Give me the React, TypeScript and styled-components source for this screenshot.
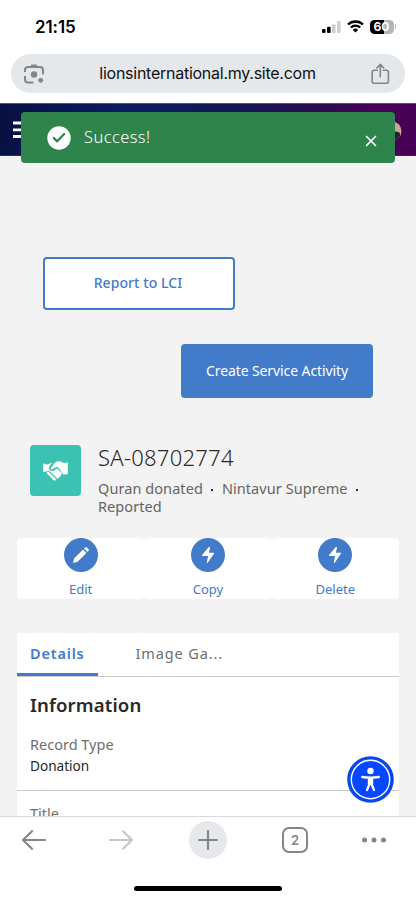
import React from 'react';
import styled, { createGlobalStyle } from 'styled-components';

const Global = createGlobalStyle`
  * { box-sizing: border-box; }
  body { margin: 0; background: #fff; }
  button { font: inherit; border: 0; padding: 0; margin: 0; background: none; color: inherit; }
  svg { display: block; flex: none; }
`;

const Screen = styled.div`
  width: 416px;
  height: 900px;
  display: flex;
  flex-direction: column;
  overflow: hidden;
  position: relative;
  background: #fff;
  font-family: 'Noto Sans', sans-serif;
`;

const StatusBar = styled.header`
  height: 54px;
  flex: none;
  display: flex;
  justify-content: space-between;
  padding: 17px 20px 0 35px;
  font-family: Inter, sans-serif;
`;

const Clock = styled.time`
  font-size: 17px;
  line-height: 20px;
  font-weight: 600;
  letter-spacing: -0.1px;
  color: #000;
`;

const StatusIcons = styled.div`
  display: flex;
  height: 19px;
  align-items: center;
  gap: 6px;
`;

const Battery = styled.div`
  display: flex;
  align-items: center;
  gap: 1px;
`;

const BatteryBody = styled.div`
  width: 24px;
  height: 14px;
  border-radius: 4.5px;
  background: linear-gradient(90deg, #000 60%, #b5b5b5 60%);
  color: #fff;
  font-size: 12px;
  line-height: 14px;
  font-weight: 700;
  text-align: center;
`;

const BatteryTip = styled.div`
  width: 1.5px;
  height: 5px;
  border-radius: 0 2px 2px 0;
  background: #b5b5b5;
`;

const AddressBar = styled.div`
  height: 39px;
  flex: none;
  margin: 0 11px 10px;
  padding: 0 15px 0 13px;
  border-radius: 20px;
  background: #e5e8eb;
  display: flex;
  align-items: center;
  justify-content: space-between;
`;

const Url = styled.span`
  font-family: Inter, sans-serif;
  font-size: 16px;
  line-height: 20px;
  letter-spacing: -0.26px;
  color: #111;
  white-space: nowrap;
  margin-top: -2px;
`;

const SiteHeader = styled.div`
  height: 53px;
  flex: none;
  border-top: 1px solid #55557a;
  border-bottom: 1px solid #35206a;
  background: linear-gradient(100deg, #07103f 0%, #071653 12%, #0a1c60 30%, #111856 55%, #2c0b50 75%, #4b0058 92%, #450054 100%);
  display: flex;
  align-items: flex-start;
  justify-content: space-between;
  padding: 17px 14px 0 13px;
`;

const Page = styled.main`
  flex: 1;
  min-height: 0;
  overflow: hidden;
  background: #f3f3f3;
  display: flex;
  flex-direction: column;
  padding: 101px 17px 0;
`;

const Toast = styled.div`
  position: absolute;
  left: 21px;
  top: 112px;
  width: 374px;
  height: 51px;
  border-radius: 4px;
  background: #2e844a;
  display: flex;
  align-items: center;
  padding: 0 18px 0 26px;
  color: #fff;
`;

const ToastText = styled.span`
  flex: 1;
  margin: -2px 0 0 13px;
  font-size: 16.5px;
  line-height: 24px;
  font-weight: 350;
  letter-spacing: 0.4px;
`;

const CloseButton = styled.button`
  padding-top: 6px;
`;

const ActionButton = styled.button<{ $primary?: boolean }>`
  width: 192px;
  height: ${(p) => (p.$primary ? 54 : 53)}px;
  flex: none;
  border-radius: 4px;
  border: 2px solid #427bc9;
  background: ${(p) => (p.$primary ? '#427bc9' : '#fff')};
  color: ${(p) => (p.$primary ? '#fff' : '#427bc9')};
  font-size: 14px;
  line-height: 20px;
  font-weight: ${(p) => (p.$primary ? 400 : 500)};
  letter-spacing: ${(p) => (p.$primary ? -0.1 : 0.08)}px;
  align-self: ${(p) => (p.$primary ? 'flex-end' : 'flex-start')};
  margin: ${(p) => (p.$primary ? '34px 26px 0 0' : '0 0 0 26px')};
  padding: ${(p) => (p.$primary ? '0' : '0 2px 2px 0')};
`;

const RecordHeader = styled.section`
  display: flex;
  gap: 17px;
  height: 92px;
  flex: none;
  margin-top: 47px;
  padding-left: 13px;
`;

const RecordIcon = styled.div`
  width: 51px;
  height: 51px;
  border-radius: 4px;
  background: #3bc2b2;
  display: grid;
  place-items: center;
`;

const RecordTitle = styled.h1`
  margin: -2px 0 0;
  font-size: 22px;
  line-height: 29px;
  font-weight: 300;
  color: #2b2826;
  letter-spacing: 0.25px;
`;

const RecordMeta = styled.p`
  margin: 7px 0 0;
  font-size: 14.5px;
  line-height: 18px;
  letter-spacing: 0.07px;
  color: #66645f;
  display: flex;
  flex-wrap: wrap;
  width: 280px;
`;

const Separator = styled.i`
  width: 2px;
  height: 2px;
  background: #25255c;
  margin: 10px 8.5px 0;
`;

const QuickActions = styled.nav`
  display: grid;
  grid-template-columns: repeat(3, 1fr);
  height: 61px;
  flex: none;
  margin-top: 1px;
`;

const QuickAction = styled.button`
  display: flex;
  flex-direction: column;
  align-items: center;
  justify-content: flex-start;
  background: #fff;
  border-radius: 4px;
  color: #427bc9;
  font-size: 13px;
  line-height: 18px;
  gap: 8px;
`;

const QuickIcon = styled.span`
  width: 34px;
  height: 34px;
  border-radius: 50%;
  background: #427bc9;
  display: grid;
  place-items: center;
`;

const Card = styled.section`
  margin-top: 34px;
  background: #fff;
  flex: none;
`;

const Tabs = styled.div`
  height: 44px;
  display: flex;
  border-bottom: 1px solid #cbcbcb;
`;

const Tab = styled.button<{ $active?: boolean }>`
  height: 43px;
  padding: 0 13px;
  margin-right: 25px;
  border-bottom: 3px solid ${(p) => (p.$active ? '#427bc9' : 'transparent')};
  color: ${(p) => (p.$active ? '#427bc9' : '#706e6b')};
  font-size: 14.5px;
  font-weight: ${(p) => (p.$active ? 600 : 400)};
  letter-spacing: ${(p) => (p.$active ? 0.82 : 0.88)}px;
  line-height: 40px;
  white-space: nowrap;
`;

const SectionTitle = styled.h2`
  margin: 0;
  padding: 15px 13px 0;
  font-size: 18.6px;
  line-height: 26px;
  font-weight: 600;
  letter-spacing: 0.12px;
  color: #2b2826;
`;

const Field = styled.div<{ $first?: boolean }>`
  border-bottom: 1px solid #c9c9c9;
  padding: ${(p) => (p.$first ? 15 : 11)}px 13px 14px;
`;

const FieldLabel = styled.div`
  font-size: 14.5px;
  line-height: 22px;
  color: #706e6b;
`;

const FieldValue = styled.div`
  font-size: 13.6px;
  line-height: 21px;
  color: #2b2826;
`;

const AccessButton = styled.button`
  position: absolute;
  left: 347px;
  top: 756px;
`;

const BottomBar = styled.footer`
  height: 84px;
  flex: none;
  border-top: 1px solid #d9d9d9;
  background: #fff;
  display: flex;
  flex-direction: column;
  align-items: center;
  padding-top: 4px;
`;

const BrowserTools = styled.div`
  width: 100%;
  height: 38px;
  display: flex;
  align-items: center;
  gap: 55px;
  padding-left: 21px;
`;

const History = styled.div`
  display: flex;
  gap: 61px;
`;

const NewTab = styled.button`
  width: 38px;
  height: 38px;
  border-radius: 50%;
  background: #e7e8ec;
  display: grid;
  place-items: center;
`;

const TabCount = styled.button`
  width: 26px;
  height: 26px;
  border: 2px solid #80868b;
  border-radius: 7px;
  color: #80868b;
  font-family: Inter, sans-serif;
  font-size: 13px;
  line-height: 22px;
  font-weight: 600;
  margin-right: -2px;
`;

const HomeIndicator = styled.div`
  width: 148px;
  height: 5px;
  border-radius: 3px;
  background: #000;
  margin-top: 27px;
`;

const Signal = () => (
  <svg width="19" height="12" viewBox="0 0 19 12">
    <rect x="0" y="8" width="3.6" height="4" rx="1" />
    <rect x="5" y="5.8" width="3.6" height="6.2" rx="1" />
    <rect x="10" y="3.2" width="3.6" height="8.8" rx="1" fill="#cfcfcf" />
    <rect x="15" y="0" width="3.6" height="12" rx="1" fill="#cfcfcf" />
  </svg>
);

const Wifi = () => (
  <svg width="17" height="13" viewBox="0 0 17 13" fill="none" stroke="#000" strokeWidth="2.4">
    <path d="M1 4.5a10.8 10.8 0 0 1 15 0" />
    <path d="M3.8 7.5a6.8 6.8 0 0 1 9.4 0" />
    <path d="M8.5 12.6 5.8 9.9a3.9 3.9 0 0 1 5.4 0z" fill="#000" stroke="none" />
  </svg>
);

const Lens = () => (
  <svg width="20" height="20" viewBox="0 0 20 20" fill="none" stroke="#80868b" strokeWidth="2">
    <path d="M1 8V6a3 3 0 0 1 3-3h12a3 3 0 0 1 3 3v4.5M1 12v3.5a3 3 0 0 0 3 3h5.5" />
    <path d="M6 3l1.4-2.5h5.2L14 3z" fill="#80868b" stroke="none" />
    <circle cx="10" cy="10.5" r="3.2" fill="#80868b" stroke="none" />
    <circle cx="16.7" cy="16.3" r="2.4" fill="#80868b" stroke="none" />
  </svg>
);

const Share = () => (
  <svg width="19" height="22" viewBox="0 0 19 22" fill="none" stroke="#80868b" strokeWidth="1.6" strokeLinecap="round" strokeLinejoin="round">
    <path d="M6.3 7.3H3.2A2 2 0 0 0 1.2 9.3v9a2 2 0 0 0 2 2h12.2a2 2 0 0 0 2-2v-9a2 2 0 0 0-2-2h-3.1M9.3 14V1.5M5.8 5l3.5-3.6L12.8 5" />
  </svg>
);

const MenuIcon = () => (
  <svg width="18" height="18" viewBox="0 0 18 18" stroke="#fff" strokeWidth="2.8">
    <path d="M0 2h18M0 8.8h18M0 15.5h18" />
  </svg>
);

const Avatar = () => (
  <svg width="20" height="20" viewBox="0 0 20 20">
    <circle cx="10" cy="10" r="9.5" fill="#c9a791" />
    <path d="M9 11q4-1 7.5 0 1.8.6 1.5 4l-2.8 3.2-6.2 1.3z" fill="#20222d" />
  </svg>
);

const Check = () => (
  <svg width="24" height="24" viewBox="0 0 24 24">
    <circle cx="12" cy="12" r="11.7" fill="#fff" />
    <path d="M6.8 12l3.4 3.3 7-7.3" fill="none" stroke="#2e844a" strokeWidth="2.3" strokeLinecap="round" strokeLinejoin="round" />
  </svg>
);

const Close = () => (
  <svg width="12" height="12" viewBox="0 0 12 12" stroke="#fff" strokeWidth="1.7" strokeLinecap="round">
    <path d="M1.5 1.5l9 9M10.5 1.5l-9 9" />
  </svg>
);

const Handshake = () => (
  <svg width="25" height="20" viewBox="0 0 76 62" fill="#fff">
    <path d="M0 7q8 5 16 3l13-5q-7 6-11 14-2 8 5 11 7 2 13-2l7-5 14 14q2 5-3 7 0 6-6 6 0 6-6 5L20 32q-4-3-8 0L0 34z" />
    <path d="M27 17Q36 1 48 1q6 0 12 4 8 3 16-2v38l-14 1-14-20q-4-5-9-3l-9 6q-7 3-7-2 0-3 4-6z" />
    <path d="M15 37L35 57" stroke="#fff" strokeWidth="8" strokeLinecap="round" />
    <path d="M19 33L42 53" stroke="#3bc2b2" strokeWidth="2.5" />
    <path d="M32 9Q20 18 22 25q3 5 10 2l11-7" fill="none" stroke="#3bc2b2" strokeWidth="2.5" />
  </svg>
);

const Pencil = () => (
  <svg width="18" height="18" viewBox="0 0 18 18" fill="#fff">
    <path d="M1 17l1.3-4.7L11 3.6 14.4 7 5.7 15.7z" />
    <path d="M12 2.6l1-1q1-.9 2 0L16.4 3q.9 1 0 2l-1 1z" />
  </svg>
);

const Bolt = () => (
  <svg width="14" height="18" viewBox="0 0 14 18" fill="#fff">
    <path d="M7.5 1.2h1.7L7.8 6.8h4.7q.9.2.4 1L6.7 16.7q-.9.6-.8-.4l1.2-6.2H1.5q-.8-.2-.4-1z" />
  </svg>
);

const Arrow = ({ forward = false }: { forward?: boolean }) => (
  <svg width="26" height="22" viewBox="0 0 26 22" fill="none" stroke={forward ? '#c4c6c8' : '#80868b'} strokeWidth="2.2" strokeLinecap="round" strokeLinejoin="round">
    <path d={forward ? 'M2 11h22M15 2.2l9 8.8-9 8.8' : 'M24 11H2M11 2.2L2 11l9 8.8'} />
  </svg>
);

const Plus = () => (
  <svg width="20" height="20" viewBox="0 0 20 20" stroke="#80868b" strokeWidth="2.2" strokeLinecap="round">
    <path d="M1.1 10h17.8M10 1.1v17.8" />
  </svg>
);

const Dots = () => (
  <svg width="26" height="6" viewBox="0 0 26 6" fill="#80868b">
    <circle cx="3.5" cy="3" r="2.5" /><circle cx="13" cy="3" r="2.5" /><circle cx="22.5" cy="3" r="2.5" />
  </svg>
);

const Accessibility = () => (
  <svg width="47" height="47" viewBox="0 0 47 47">
    <circle cx="23.5" cy="23.5" r="23.3" fill="#0648ef" />
    <circle cx="23.5" cy="23.5" r="19.2" fill="#0648ff" stroke="#fff" strokeWidth="1.4" />
    <circle cx="23.5" cy="15" r="3.2" fill="#fff" />
    <path d="M15.2 21q8.3 1.3 16.6 0M20 34l2.5-6V22h2v6l2.5 6" fill="none" stroke="#fff" strokeWidth="2.3" strokeLinecap="round" />
    <path d="M20.8 21h5.4v7.5h-5.4z" fill="#fff" />
  </svg>
);

export default function App() {
  return (
    <Screen>
      <Global />
      <StatusBar>
        <Clock>21:15</Clock>
        <StatusIcons>
          <Signal />
          <Wifi />
          <Battery><BatteryBody>60</BatteryBody><BatteryTip /></Battery>
        </StatusIcons>
      </StatusBar>
      <AddressBar><Lens /><Url>lionsinternational.my.site.com</Url><Share /></AddressBar>
      <SiteHeader><MenuIcon /><Avatar /></SiteHeader>
      <Page>
        <ActionButton>Report to LCI</ActionButton>
        <ActionButton $primary>Create Service Activity</ActionButton>
        <RecordHeader>
          <RecordIcon><Handshake /></RecordIcon>
          <div>
            <RecordTitle>SA-08702774</RecordTitle>
            <RecordMeta>
              <span>Quran donated</span><Separator />
              <span>Nintavur Supreme</span><Separator />
              <span>Reported</span>
            </RecordMeta>
          </div>
        </RecordHeader>
        <QuickActions>
          <QuickAction><QuickIcon><Pencil /></QuickIcon>Edit</QuickAction>
          <QuickAction><QuickIcon><Bolt /></QuickIcon>Copy</QuickAction>
          <QuickAction><QuickIcon><Bolt /></QuickIcon>Delete</QuickAction>
        </QuickActions>
        <Card>
          <Tabs><Tab $active>Details</Tab><Tab>Image Ga...</Tab></Tabs>
          <SectionTitle>Information</SectionTitle>
          <Field $first><FieldLabel>Record Type</FieldLabel><FieldValue>Donation</FieldValue></Field>
          <Field><FieldLabel>Title</FieldLabel></Field>
        </Card>
      </Page>
      <BottomBar>
        <BrowserTools>
          <History><Arrow /><Arrow forward /></History>
          <NewTab><Plus /></NewTab>
          <TabCount>2</TabCount>
          <Dots />
        </BrowserTools>
        <HomeIndicator />
      </BottomBar>
      <Toast><Check /><ToastText>Success!</ToastText><CloseButton><Close /></CloseButton></Toast>
      <AccessButton><Accessibility /></AccessButton>
    </Screen>
  );
}
